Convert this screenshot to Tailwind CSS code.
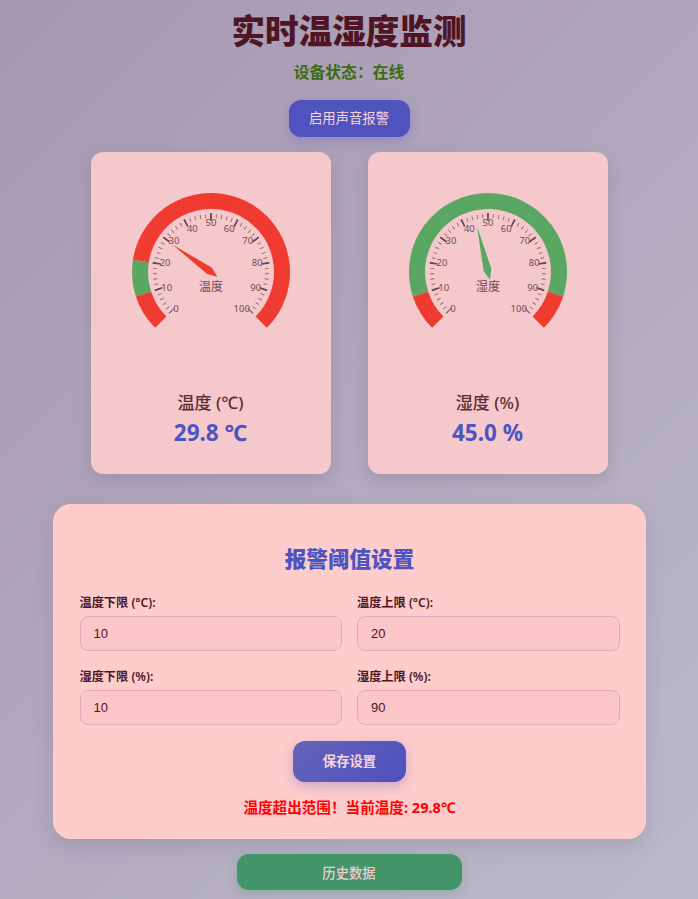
<!DOCTYPE html>
<html lang="zh">
<head>
<meta charset="utf-8">
<title>实时温湿度监测</title>
<script src="https://cdn.jsdelivr.net/npm/@tailwindcss/browser@4"></script>
</head>
<body class="h-[899px] overflow-hidden bg-[linear-gradient(135deg,#a797b2_0%,#bbbac8_100%)] font-['Noto_Sans','Noto_Sans_CJK_SC',sans-serif] text-[#4f1524]">
  <div class="flex flex-col items-center pt-[9px]">
    <h1 class="h-[44px] text-[33.6px] leading-[44px] font-black text-[#4f1524]">实时温湿度监测</h1>
    <p class="mt-[7px] h-[24px] text-[15.8px] leading-[24px] font-bold text-[#3b6b12]">设备状态：在线</p>
    <button class="mt-[16px] h-[37px] w-[121px] rounded-[12px] bg-[#5052bd] text-[13.33px] text-[#f9d5dc] shadow-[0_4px_12px_rgba(80,82,189,0.3)]">启用声音报警</button>

    <div class="mt-[15px] flex gap-[37px]">
      <section class="h-[322px] w-[240px] rounded-[12px] bg-[#f5c8cb] text-center shadow-[0_6px_16px_rgba(70,50,90,0.16)]">
        <svg class="block h-[240px] w-[240px]" viewBox="0 0 240 240" fill="none" font-family="Noto Sans, Noto Sans CJK SC, sans-serif">
          <path d="M69.8 170.2A71 71 0 0 1 52.47 141.94" stroke="#f03c30" stroke-width="16"/>
          <path d="M52.47 141.94A71 71 0 0 1 49.87 108.89" stroke="#5aa663" stroke-width="16"/>
          <path d="M49.87 108.89A71 71 0 1 1 170.2 170.2" stroke="#f03c30" stroke-width="16"/>
          <path d="M80.4 159.6A56 56 0 1 1 159.6 159.6" pathLength="270" stroke="#8a666e" stroke-width="4" stroke-dasharray="0.9 4.5" stroke-dashoffset="0.45"/>
          <path d="M81.1 158.9A55 55 0 1 1 158.9 158.9" pathLength="270" stroke="#6b4750" stroke-width="8" stroke-dasharray="1.8 25.2" stroke-dashoffset="0.9"/>
          <g transform="translate(120 120)" fill="#6f4c55" font-size="9.5" text-anchor="middle" dominant-baseline="central">
            <text x="-35" y="36.7">0</text><text x="-44.3" y="15.7">10</text><text x="-46" y="-9.3">20</text><text x="-37" y="-31.7">30</text><text x="-18.7" y="-43.3">40</text><text x="0" y="-49.3">50</text><text x="18.3" y="-43.3">60</text><text x="36.7" y="-31.7">70</text><text x="46.3" y="-9.3">80</text><text x="44.7" y="15.7">90</text><text x="30.7" y="36.7">100</text>
            <text x="0" y="14.5" font-size="12">温度</text>
            <polygon points="0,-47 4,-2 0,8 -4,-2" fill="#f03c30" transform="rotate(-54.54)"/>
          </g>
        </svg>
        <h2 class="-mt-[1px] h-[24px] text-[17px] leading-[24px] font-medium text-[#5e2c36]">温度 (℃)</h2>
        <p class="mt-[1px] h-[34px] text-[22.5px] leading-[34px] font-bold text-[#4c55bf]">29.8 ℃</p>
      </section>

      <section class="h-[322px] w-[240px] rounded-[12px] bg-[#f5c8cb] text-center shadow-[0_6px_16px_rgba(70,50,90,0.16)]">
        <svg class="block h-[240px] w-[240px]" viewBox="0 0 240 240" fill="none" font-family="Noto Sans, Noto Sans CJK SC, sans-serif">
          <path d="M69.8 170.2A71 71 0 0 1 52.47 141.94" stroke="#f03c30" stroke-width="16"/>
          <path d="M52.47 141.94A71 71 0 1 1 187.53 141.94" stroke="#5aa663" stroke-width="16"/>
          <path d="M187.53 141.94A71 71 0 0 1 170.2 170.2" stroke="#f03c30" stroke-width="16"/>
          <path d="M80.4 159.6A56 56 0 1 1 159.6 159.6" pathLength="270" stroke="#8a666e" stroke-width="4" stroke-dasharray="0.9 4.5" stroke-dashoffset="0.45"/>
          <path d="M81.1 158.9A55 55 0 1 1 158.9 158.9" pathLength="270" stroke="#6b4750" stroke-width="8" stroke-dasharray="1.8 25.2" stroke-dashoffset="0.9"/>
          <g transform="translate(120 120)" fill="#6f4c55" font-size="9.5" text-anchor="middle" dominant-baseline="central">
            <text x="-35" y="36.7">0</text><text x="-44.3" y="15.7">10</text><text x="-46" y="-9.3">20</text><text x="-37" y="-31.7">30</text><text x="-18.7" y="-43.3">40</text><text x="0" y="-49.3">50</text><text x="18.3" y="-43.3">60</text><text x="36.7" y="-31.7">70</text><text x="46.3" y="-9.3">80</text><text x="44.7" y="15.7">90</text><text x="30.7" y="36.7">100</text>
            <text x="0" y="14.5" font-size="12">湿度</text>
            <polygon points="0,-47 4,-2 0,8 -4,-2" fill="#5aa663" transform="rotate(-13.5)"/>
          </g>
        </svg>
        <h2 class="-mt-[1px] h-[24px] text-[17px] leading-[24px] font-medium text-[#5e2c36]">湿度 (%)</h2>
        <p class="mt-[1px] h-[34px] text-[22.5px] leading-[34px] font-bold text-[#4c55bf]">45.0 %</p>
      </section>
    </div>

    <section class="mt-[30px] w-[593px] rounded-[18px] bg-[#ffcccc] pt-[40px] pr-[26px] pb-[22px] pl-[27px] shadow-[0_8px_20px_rgba(70,50,90,0.14)]">
      <h2 class="h-[30px] text-center text-[21.6px] leading-[30px] font-black text-[#4c55bf]">报警阈值设置</h2>
      <div class="mt-[21px] grid grid-cols-2 gap-x-[15px] gap-y-[18px]">
        <label class="block text-[12.2px] leading-[16px] font-semibold text-[#4f1524]">温度下限 (°C):
          <input type="text" value="10" class="mt-[5px] block h-[35px] w-full rounded-[8px] border border-[#dcabbd] bg-[#fcc5c8] px-[13px] font-['Liberation_Sans'] text-[13px] font-normal text-[#4f1524]">
        </label>
        <label class="block text-[12.2px] leading-[16px] font-semibold text-[#4f1524]">温度上限 (°C):
          <input type="text" value="20" class="mt-[5px] block h-[35px] w-full rounded-[8px] border border-[#dcabbd] bg-[#fcc5c8] px-[13px] font-['Liberation_Sans'] text-[13px] font-normal text-[#4f1524]">
        </label>
        <label class="block text-[12.2px] leading-[16px] font-semibold text-[#4f1524]">湿度下限 (%):
          <input type="text" value="10" class="mt-[5px] block h-[35px] w-full rounded-[8px] border border-[#dcabbd] bg-[#fcc5c8] px-[13px] font-['Liberation_Sans'] text-[13px] font-normal text-[#4f1524]">
        </label>
        <label class="block text-[12.2px] leading-[16px] font-semibold text-[#4f1524]">湿度上限 (%):
          <input type="text" value="90" class="mt-[5px] block h-[35px] w-full rounded-[8px] border border-[#dcabbd] bg-[#fcc5c8] px-[13px] font-['Liberation_Sans'] text-[13px] font-normal text-[#4f1524]">
        </label>
      </div>
      <div class="mt-[16px] flex justify-center">
        <button class="h-[41px] w-[113px] rounded-[12px] bg-[linear-gradient(135deg,#6464ba,#4e50bd)] pt-[1px] text-[13.33px] font-bold text-[#f9d5dc] shadow-[0_4px_12px_rgba(80,82,189,0.3)]">保存设置</button>
      </div>
      <p class="mt-[15px] h-[20px] text-center text-[14.6px] leading-[20px] font-bold text-[#ff0000]">温度超出范围！当前温度: 29.8℃</p>
    </section>

    <button class="mt-[15px] h-[36px] w-[225px] rounded-[12px] bg-[#419569] pt-[3px] text-[13.33px] font-medium text-[#f5c9d2] shadow-[0_4px_10px_rgba(65,149,105,0.25)]">历史数据</button>
  </div>
</body>
</html>
